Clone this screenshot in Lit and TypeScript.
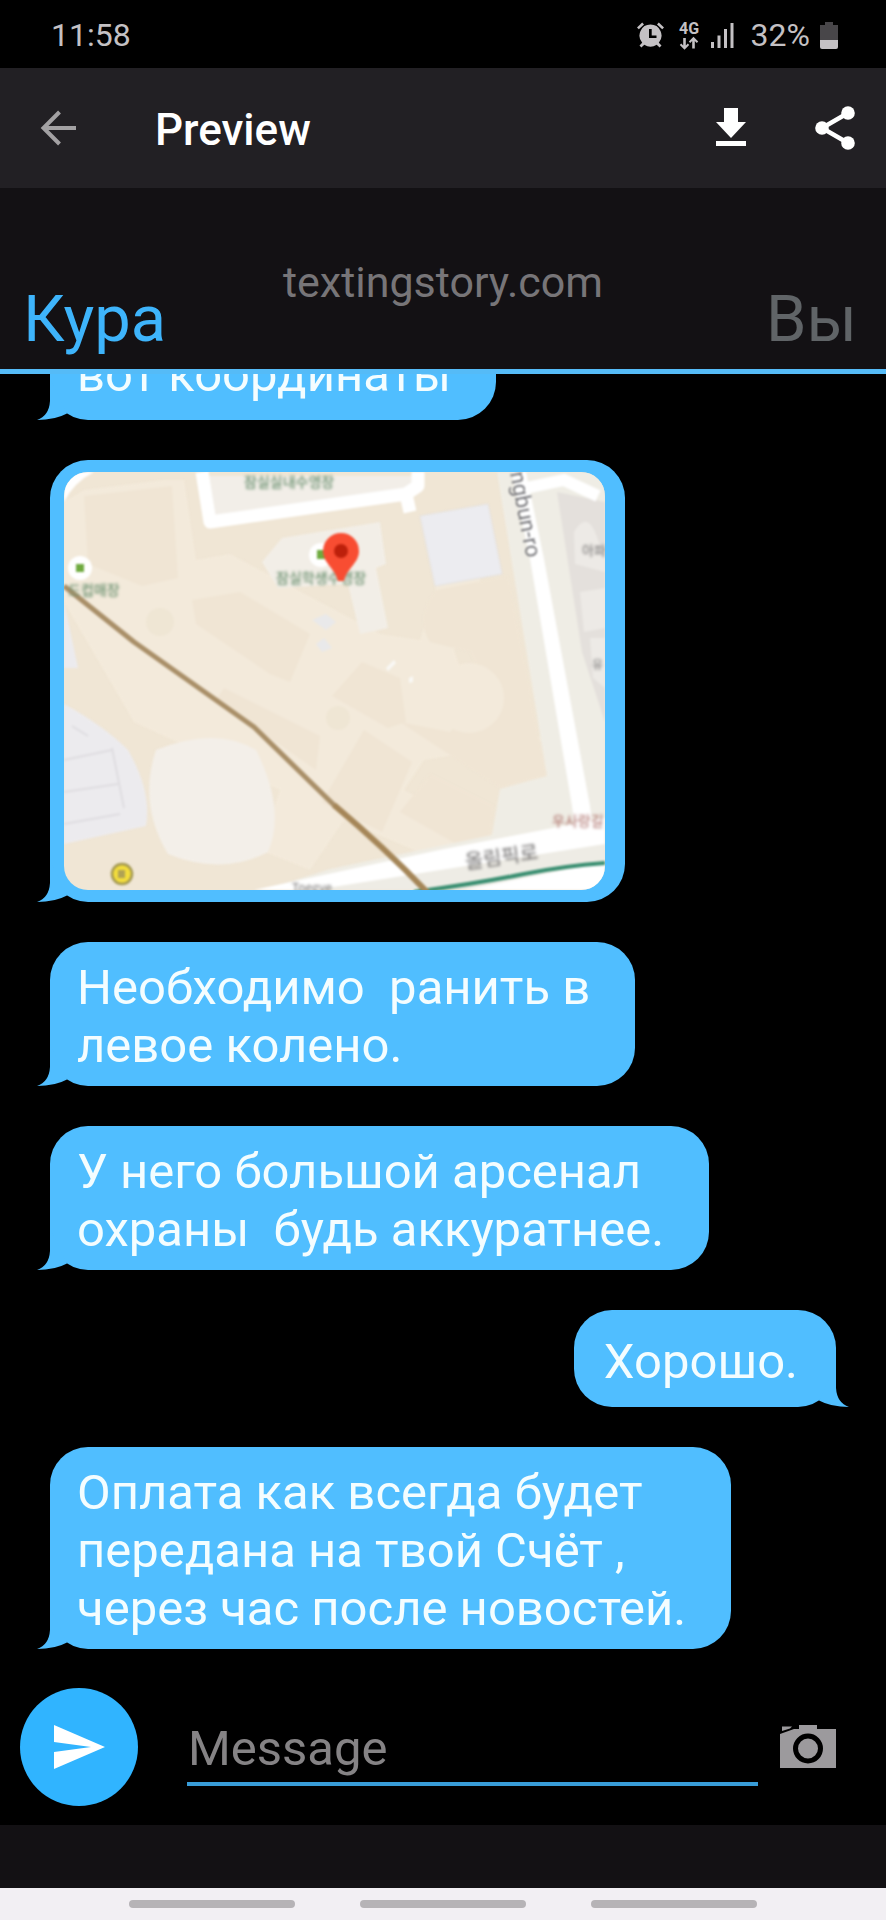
import { LitElement, html, css } from "lit";
import { customElement, property } from "lit/decorators.js";
import { classMap } from "lit/directives/class-map.js";

interface Message {
  side: "left" | "right";
  text?: string;
  map?: boolean;
}

const messages: Message[] = [
  { side: "left", text: "вот координаты" },
  { side: "left", map: true },
  { side: "left", text: "Необходимо  ранить в\nлевое колено." },
  { side: "left", text: "У него большой арсенал\nохраны  будь аккуратнее." },
  { side: "right", text: "Хорошо." },
  { side: "left", text: "Оплата как всегда будет\nпередана на твой Счёт ,\nчерез час после новостей." },
];

@customElement("status-bar")
class StatusBar extends LitElement {
  static styles = css`
    :host { display: flex; align-items: center; height: 68px; padding: 2px 48px 0 51px; box-sizing: border-box; background: #000; color: #c4c1c4; font-size: 32px; }
    .time { flex: 1; }
    .icons { display: flex; align-items: center; gap: 13px; }
    .icon { display: block; fill: currentColor; }
    .level { margin: 0 4px 0 -3px; }
    .battery { margin-left: -3px; }
  `;
  render() {
    return html`
      <span class="time">11:58</span>
      <div class="icons">
        <svg class="icon" width="27" height="26" viewBox="0 0 27 26" aria-label="Alarm" role="img">
          <path fill-rule="evenodd" d="M13.500 2.500a11 11 0 0 1 8.300 18.200l2.700 2.800-1.900 1.900-2.900-2.700a11 11 0 0 1-12.400 0l-2.900 2.700-1.900-1.900 2.700-2.800A11 11 0 0 1 13.500 2.500zM12 7v9h7.500v-2.600h-4.800V7z"/>
          <path d="M0 5.500 5.200 0.600 7 2.500 1.800 7.300zM27 5.500 21.800 0.600 20 2.500 25.200 7.300z"/>
        </svg>
        <svg class="icon" width="24" height="32" viewBox="0 0 24 32" aria-label="4G" role="img">
          <text x="12" y="15" text-anchor="middle" font-size="16" font-weight="700">4G</text>
          <path d="M6.200 19h2.600v7.500l2-2 1.400 1.500-4.700 4.700L2.800 26l1.400-1.500 2 2zM15.200 29.500h2.600V22l2 2 1.400-1.500-4.700-4.700-4.700 4.700 1.400 1.500 2-2z"/>
        </svg>
        <svg class="icon level" width="23" height="25" viewBox="0 0 23 25" aria-label="Signal" role="img">
          <path d="M0 19h3v6H0zM6.500 12.500h3V25h-3zM13 6h3v19h-3zM19.500 0h3v25h-3z"/>
        </svg>
        <span>32%</span>
        <svg class="icon battery" width="18" height="27" viewBox="0 0 18 27" aria-label="Battery" role="img">
          <path fill="#484649" d="M5 0h8v3h5v15H0V3h5z"/>
          <path d="M0 18h18v7a2 2 0 0 1-2 2H2a2 2 0 0 1-2-2z"/>
        </svg>
      </div>
    `;
  }
}

@customElement("app-bar")
class AppBar extends LitElement {
  static styles = css`
    :host { display: flex; align-items: center; height: 120px; padding: 0 31px 0 40px; background: #222024; color: #fff; }
    .title { flex: 1; margin: 0; padding: 4px 0 0 78px; font-size: 44px; font-weight: 500; line-height: 52px; }
    .action { display: block; padding: 0; border: 0; background: none; color: inherit; }
    .back { color: #a3a1a3; }
    .share { margin-left: 68px; }
    .icon { display: block; fill: currentColor; }
  `;
  render() {
    return html`
      <button class="action back" aria-label="Back">
        <svg class="icon" width="37" height="36" viewBox="0 0 37 36"><path fill="none" stroke="currentColor" stroke-width="4" d="M19.500 2 3.500 18l16 16M3 18h33"/></svg>
      </button>
      <h1 class="title">Preview</h1>
      <button class="action" aria-label="Download">
        <svg class="icon" width="32" height="40" viewBox="0 0 32 40"><path d="M9 0h14v14h8L16 30 1 14h8zM1 33h30v5H1z"/></svg>
      </button>
      <button class="action share" aria-label="Share">
        <svg class="icon" width="40" height="44" viewBox="0 0 40 44">
          <circle cx="7" cy="22" r="6.800"/><circle cx="33" cy="7" r="6.800"/><circle cx="33" cy="37" r="6.800"/>
          <path fill="none" stroke="currentColor" stroke-width="4.500" d="M33 7 7 22l26 15"/>
        </svg>
      </button>
    `;
  }
}

@customElement("chat-header")
class ChatHeader extends LitElement {
  static styles = css`
    :host { display: grid; grid-template-columns: 1fr auto 1fr; align-items: start; padding: 35px 29px 12px 23px; background: #131114; border-bottom: 5px solid #55bbf7; }
    .name { padding-top: 21px; font-size: 65px; line-height: 76px; }
    .active { color: #3eb4fb; }
    .me { text-align: right; color: #606467; }
    .site { padding-left: 6px; color: #777578; font-size: 43px; line-height: 44px; }
  `;
  render() {
    return html`
      <span class="name active">Кура</span>
      <span class="site">textingstory.com</span>
      <span class="name me">Вы</span>
    `;
  }
}

@customElement("map-picture")
class MapPicture extends LitElement {
  static styles = css`
    :host { display: block; }
    .map { display: block; width: 541px; max-width: 100%; height: auto; border-radius: 24px; }
    .soft { filter: blur(1px); }
    .place { font-family: "Noto Sans CJK KR", sans-serif; filter: blur(1px); }
  `;
  render() {
    return html`
      <svg class="map" viewBox="0 0 541 418" role="img" aria-label="Map">
        <rect width="541" height="418" fill="#f0e6d5"/>
        <g class="soft">
          <path fill="#f3eadb" d="M0 30 20 18 100 8h20l12 80 34-6 150 80 40 6 16-50-8-70 36-10 16 70-26 70 10 30 80 60-120 20-20 30 110 60 -30 30-140-60-34 50-50-20 20-60L70 250 0 130z"/>
          <path fill="#f0e5d4" d="M20 24 108 14l6 92-36 8-54-22zM128 128l48-8 70 42-20 48-20-8-74-50zM160 216l96 48-4 34-100-70zM372 118l72-14 38 200-46 12-100-66 50 10 40-40-20-40-40-10q-16-24 6-52zM268 224l30-34 38 16 6 44-18 6z"/>
          <path fill="#f0e5d4" d="M300 258 348 290l-30 70-60-30zM366 302l64 32-4 30-30 10-60-34z"/>
          <circle cx="96" cy="150" r="14" fill="#efe6d4"/><circle cx="274" cy="246" r="12" fill="#efe6d4"/>
          <circle cx="405" cy="226" r="35" fill="#f3eadb"/>
          <path fill="#f3efe9" d="M92 278q60-24 100 0 30 60 12 102-46 24-100 2-30-50-12-104z"/>
          <path fill="#ecebee" d="M0 232q40 22 64 46 24 42 18 76L0 372zM0 130l14 66H0z"/>
          <path fill="none" stroke="#dfdde1" stroke-width="2" d="M0 288l48-10M0 320l54-8M0 352l56-10M48 276l12 60M8 254l16 10"/>
          <path fill="#f2eee7" d="M218 66 316 50l6 42-10 4 12 60-28 6-12-50-70 4-16-26z"/>
          <path fill="#f2eee8" d="M142 4h206v16l-198 27z"/>
          <path fill="#ececf0" stroke="#e4e2e1" d="M356 44 424 32l14 70-67 12z"/>
          <path fill="#e9e9ea" d="M248 148l14-6 10 8-10 8zM252 172l8-6 8 10-10 4z"/>
          <path fill="#f9f8f5" d="M322 196l8-8 2 3-8 8zM345 206l4-2v6l-4 1z"/>
          <path fill="#efede5" d="M433 0 483 304 436 317 428 363 266 397 200 418H541V0z"/>
          <path fill="#e4e0dc" d="M493 20 541 30V250L518 180z"/>
          <path fill="#edeae6" d="M510 60q14-24 24 8l7 20v12l-30-8zM516 120l25-4v40l-21 4zM526 166h15v50l-12-10z"/>
          <path fill="none" stroke="#fff" stroke-width="13" stroke-linejoin="round" d="M138 0 146 50 342 22 354 14V0M342 22l4 18"/>
          <path fill="none" stroke="#fff" stroke-width="12" d="M462 16 500 8l34 16"/>
          <path fill="#fff" d="M448 0h14l18 87 46 247 4 30h-18l-4-30L466 87z"/>
          <path fill="#fff" d="M190 418 380 377 541 346V418z"/>
          <path fill="#eeece5" d="M250 418 541 372v18L400 418z"/>
          <path fill="#fff" d="M0 0H30Q10 10 0 30z"/>
          <path fill="#fff" d="M400 418 541 394v24z"/>
          <path fill="none" stroke="#388e70" stroke-width="4" d="M350 420q60-8 110-18 40-8 81-11"/>
          <path fill="none" stroke="#a98f68" stroke-width="5" stroke-linejoin="round" d="M0 114 70 170 190 255 272 335"/>
          <path fill="none" stroke="#a58658" stroke-width="6" d="M270 333q50 42 94 88"/>
          <circle cx="16" cy="96" r="12" fill="#fff"/><rect x="12" y="92" width="8" height="8" fill="#6faa3f"/>
          <circle cx="257" cy="83" r="12" fill="#fff"/><rect x="253" y="78" width="10" height="9" fill="#6faa3f"/>
          <circle cx="58" cy="402" r="10" fill="#f3dd3c" stroke="#a39850" stroke-width="2.500"/><rect x="54" y="398" width="7" height="8" fill="#b0a254"/>
          <g class="place" font-size="14" font-weight="500" fill="#6d9272">
            <text x="180" y="15">잠실실내수영장</text>
            <text x="212" y="111">잠실학생수영장</text>
            <text x="4" y="123">드컵매장</text>
          </g>
          <g class="place" fill="#6f6d6d">
            <text x="518" y="83" font-size="13">아파</text>
            <text x="528" y="197" font-size="12">유</text>
            <text x="228" y="420" font-size="12">Toegye</text>
            <text x="488" y="354" font-size="14" fill="#a96862">우사랑길</text>
            <text x="402" y="397" font-size="20" transform="rotate(-8 402 397)">올림픽로</text>
          </g>
          <text transform="translate(446 1) rotate(79)" font-size="22" fill="#77777b">ngbun-ro</text>
          <path fill="#f84d32" d="M277 61a18 18 0 0 1 18 18c0 12-12 17-15 30h-6c-3-13-15-18-15-30a18 18 0 0 1 18-18z"/>
          <circle cx="277" cy="79" r="7" fill="#bd200b"/>
        </g>
      </svg>
    `;
  }
}

@customElement("chat-bubble")
class ChatBubble extends LitElement {
  @property({ attribute: false }) message!: Message;
  static styles = css`
    :host { display: flex; }
    .bubble { position: relative; display: flex; align-items: center; box-sizing: border-box; min-height: 97px; padding: 17px 45px 11px 27px; border-radius: 38px; background: #50beff; color: #f4fdff; font-size: 49px; line-height: 58px; }
    .text { margin: 0; white-space: pre-wrap; }
    .right { margin-left: auto; padding: 17px 38px 11px 30px; }
    .picture { padding: 12px 20px 12px 14px; }
    .tail { position: absolute; left: -13px; bottom: 0; fill: #50beff; }
    .right .tail { left: auto; right: -13px; transform: scaleX(-1); }
  `;
  render() {
    const m = this.message;
    return html`
      <div class=${classMap({ bubble: true, right: m.side === "right", picture: !!m.map })}>
        ${m.map ? html`<map-picture></map-picture>` : html`<p class="text">${m.text}</p>`}
        <svg class="tail" width="31" height="42" viewBox="0 0 31 42" aria-hidden="true">
          <path d="M0 42Q12 38 13 23V0L30 35.500Q18 42 0 42z"/>
        </svg>
      </div>
    `;
  }
}

@customElement("message-composer")
class MessageComposer extends LitElement {
  static styles = css`
    :host { display: flex; align-items: center; padding: 39px 50px 19px 20px; }
    .send { display: grid; place-items: center; flex: none; width: 118px; height: 118px; padding: 0; border: 0; border-radius: 50%; background: #30b4ff; }
    .field { flex: 1; min-width: 0; margin: 0 22px 0 49px; padding: 6px 1px 0; height: 78px; box-sizing: border-box; border: 0; border-bottom: 4px solid #389cd8; border-radius: 0; background: none; color: #fff; font: 49px/58px Roboto, sans-serif; outline: none; }
    .field::placeholder { color: #858385; opacity: 1; }
    .camera { flex: none; padding: 0; border: 0; background: none; }
    .icon { display: block; }
  `;
  render() {
    return html`
      <button class="send" aria-label="Send">
        <svg class="icon" width="52" height="46" viewBox="0 0 52 46"><path fill="#fff" d="M1 1 52 23 1 45V28l37-5L1 18z"/></svg>
      </button>
      <input class="field" type="text" placeholder="Message" aria-label="Message" />
      <button class="camera" aria-label="Camera">
        <svg class="icon" width="56" height="46" viewBox="0 0 56 46">
          <path fill="#9c9a9d" d="M19 1h18v4h19v39H0V10L14 5h5z"/>
          <path fill="#9c9a9d" d="M2 2.500h10L10 4.500 2 7z"/>
          <circle cx="28" cy="24.500" r="12.500" fill="#9c9a9d" stroke="#000" stroke-width="5"/>
        </svg>
      </button>
    `;
  }
}

@customElement("app-root")
class AppRoot extends LitElement {
  static styles = css`
    :host { display: flex; flex-direction: column; min-height: 100vh; background: #131114; font-family: Roboto, sans-serif; }
    .log { display: flex; flex-direction: column; justify-content: flex-end; gap: 40px; padding: 0 50px; background: #000; overflow: hidden; }
    .clipped { margin-top: -51px; }
    .header { position: relative; z-index: 1; margin-top: 37px; }
    .composer { background: #000; }
    .nav { display: flex; justify-content: center; align-items: center; gap: 65px; height: 32px; margin-top: auto; background: #f2eff3; }
    .key { width: 166px; height: 8px; padding: 0; border: 0; border-radius: 4px; background: #b6b3b6; }
  `;
  render() {
    return html`
      <status-bar></status-bar>
      <app-bar></app-bar>
      <chat-header class="header"></chat-header>
      <div class="log">
        ${messages.map((m, i) => html`<chat-bubble class=${classMap({ clipped: i === 0 })} .message=${m}></chat-bubble>`)}
      </div>
      <message-composer class="composer"></message-composer>
      <nav class="nav">
        <button class="key" aria-label="Recent apps"></button>
        <button class="key" aria-label="Home"></button>
        <button class="key" aria-label="Back"></button>
      </nav>
    `;
  }
}
